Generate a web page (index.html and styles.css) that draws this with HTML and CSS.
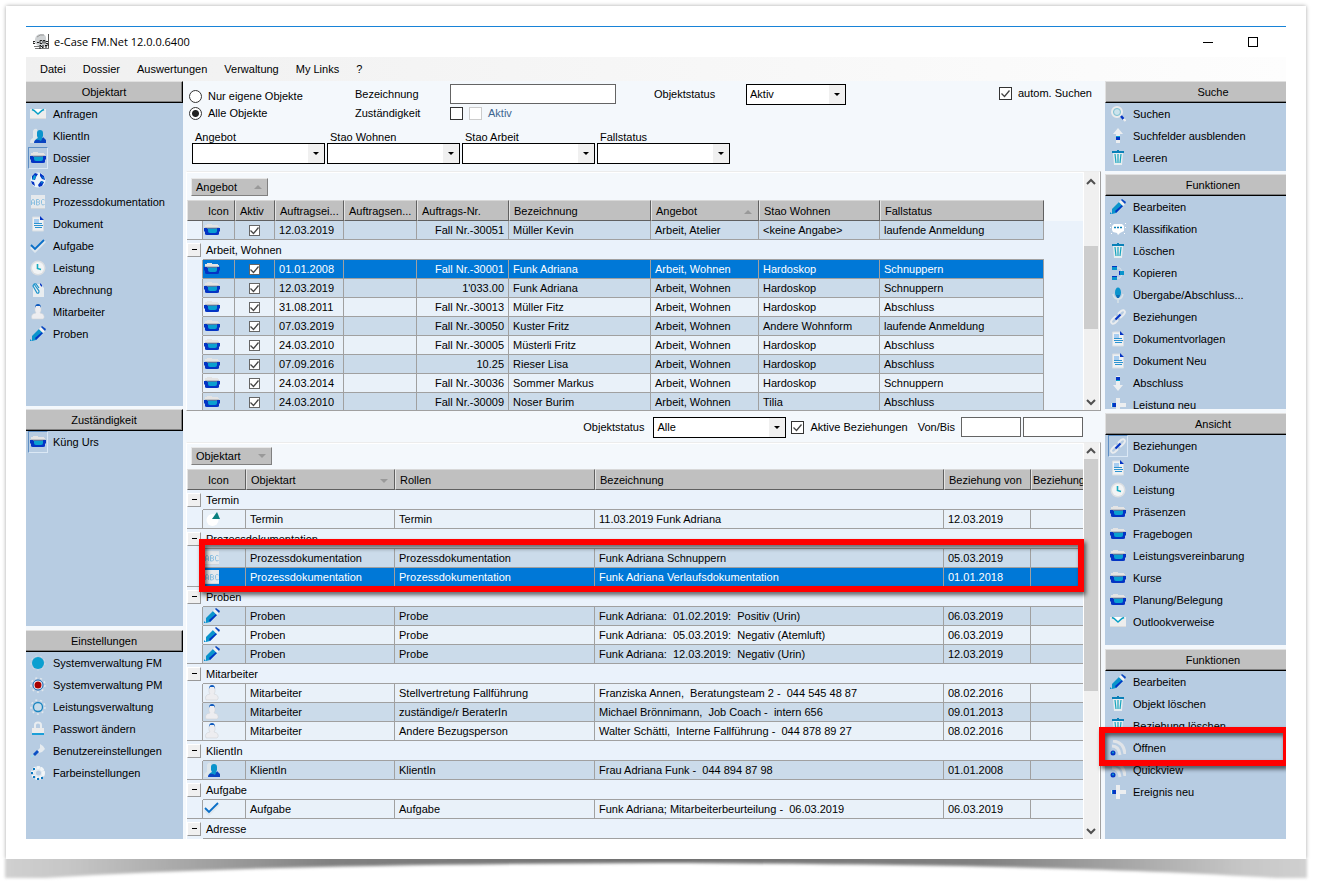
FILE: index.html
```html
<!DOCTYPE html>
<html lang="de">
<head>
<meta charset="utf-8">
<title>e-Case FM.Net 12.0.0.6400</title>
<link rel="stylesheet" href="styles.css">
</head>
<body>
<svg class="sprite" aria-hidden="true">
  <symbol id="mail" viewBox="0 0 16 16"><path d="M0 3h16v10H0z" fill="#ededed"/><path d="M2 3h12v1L8 9 2 4z" fill="#fff"/><path d="M2 3.500l2 1 4 3.500 4-3.500 2-1" fill="none" stroke="#0a9fc4" stroke-width="1.500"/><path d="M0 12.500h16" stroke="#dcdcdc"/></symbol>
  <symbol id="client" viewBox="0 0 16 16"><path d="M3 3q1-3 4-2l1 5-2 9H0q0-4 3-5z" fill="#dfe6ea"/><path d="M7 5q0-3 3-3t3 3v3l-1 2q3 0 3 3H5q0-2 3-3L7 8z" fill="#0a94cc"/><path d="M4 15q0-4 5-3l2 1 2-4 3 3v3z" fill="#0a44c0"/></symbol>
  <symbol id="dossier" viewBox="0 0 16 16"><path d="M1 5V3h2V2h5v1h6v1h1v2H1z" fill="#e4e4e4"/><path d="M1 5h14v1H1z" fill="#bfc2c6"/><path d="M0 6h16v3l-1 1v2q0 1-2 1H3q-2 0-2-1v-2L0 9z" fill="#0434c4"/><path d="M4 6h9v3q0 2-2 2H6q-2 0-2-2z" fill="#0a9fd0"/><path d="M3 6h10v1H3z" fill="#4a78a8"/></symbol>
  <symbol id="globe" viewBox="0 0 16 16"><circle cx="8" cy="8" r="7.500" fill="#ebf4fa"/><path d="M2 4l3-3 3 1-2 3-1 3-3-1zM10 1l4 3 1 4-3-1-2-3zM1 9l3 1 1 4-3-2zM11 9l3 1-2 4-3 1-1-2z" fill="#0434c4"/><path d="M4 3l2 1-1 3-3 1zM11 10l2-1-1 3zM12 4l2 2-1 1z" fill="#0a9fd0"/></symbol>
  <symbol id="abc" viewBox="0 0 16 16"><path d="M1 1h14v13H1z" fill="#e6e9ec"/><path d="M1 14.500h14" stroke="#cfd5da"/><path d="M1.500 11V7l1-1.500h1l1 1.500v4M1.500 9h3M6.500 11V5.500h2l1 1v1l-1 .5 1 1v1l-1 1zM6.500 8h2M14.500 6l-1-.5h-1l-1 1v3l1 1.500h1l1-1" fill="none" stroke="#8bbfe0"/></symbol>
  <symbol id="doc" viewBox="0 0 16 16"><path d="M2.500 1h8l3 3v11h-11z" fill="#eef1f4" stroke="#d8dde2"/><path d="M10 0l4 4h-4z" fill="#0434c4"/><path d="M4 3h5v4H4z" fill="#a8cdf0"/><path d="M4 7.500h8M4 9.500h9M5 11.500h7" stroke="#2c93d0"/></symbol>
  <symbol id="check" viewBox="0 0 16 16"><path d="M1 9l4 4L15 3" fill="none" stroke="#dfe7ee" stroke-width="3"/><path d="M1 7l4 4L14 2" fill="none" stroke="#0a6fc8" stroke-width="1.800"/></symbol>
  <symbol id="clock" viewBox="0 0 16 16"><circle cx="8" cy="8" r="7.500" fill="#dcdfe2"/><circle cx="8" cy="8" r="6" fill="#f2f4f5"/><path d="M7.500 4v4.500L11 9.500" fill="none" stroke="#16abc0" stroke-width="1.600"/></symbol>
  <symbol id="clip" viewBox="0 0 16 16"><path d="M3 2h7l4 4v9H3z" fill="#e9edf0"/><path d="M10 1l2 2v2l-2-2z" fill="#0434c4"/><path d="M4 2l5 7q0 3-2 2L3 4q1-3 3-2l3 4" fill="none" stroke="#1992cc" stroke-width="1.200"/></symbol>
  <symbol id="person" viewBox="0 0 16 16"><path d="M5 3q3-4 6 0v4l-1 2q5 1 4 5l-1 1H2q-2-5 4-6L5 7z" fill="#ededf0" stroke="#d0d4d8" stroke-width=".6"/><path d="M5 4q0-4 3-4t3 4l-1-2H6z" fill="#0b58bd"/></symbol>
  <symbol id="pencil" viewBox="0 0 16 16"><path d="M2 10l7-7 4 4-7 7-4 1z" fill="#0a94cc"/><path d="M5 12l7-6 1 1-7 7z" fill="#0434c4"/><path d="M9 3l2-2 4 4-2 2z" fill="#f1f1f1"/><path d="M11 1l1-1 4 3-1 2z" fill="#0b48c0"/><path d="M0 15v-2l2 2z" fill="#0a8fd0"/></symbol>
  <symbol id="sysfm" viewBox="0 0 16 16"><circle cx="8" cy="8" r="7" fill="none" stroke="#d3dde6" stroke-dasharray="2 3"/><circle cx="8" cy="8" r="6" fill="#0a9fd0"/></symbol>
  <symbol id="syspm" viewBox="0 0 16 16"><circle cx="8" cy="8" r="7" fill="none" stroke="#e3e8ec" stroke-width="1.500" stroke-dasharray="2 3"/><circle cx="8" cy="8" r="5" fill="#fff" stroke="#1262b0"/><circle cx="8" cy="8" r="3.500" fill="#a80000"/></symbol>
  <symbol id="ring" viewBox="0 0 16 16"><circle cx="8" cy="8" r="7" fill="none" stroke="#e3e8ec" stroke-width="1.500" stroke-dasharray="2 3"/><circle cx="8" cy="8" r="4.500" fill="#c8dcea" stroke="#1b86c0" stroke-width="1.300"/></symbol>
  <symbol id="lock" viewBox="0 0 16 16"><path d="M5 8V4q0-2.500 3-2.500T11 4v4" fill="none" stroke="#e9edf0" stroke-width="2"/><path d="M2 7h12v6H2z" fill="#ececec"/><path d="M2 12h12v2H2z" fill="#1c9fd8"/></symbol>
  <symbol id="wrench" viewBox="0 0 16 16"><path d="M7 8l3-3V1l3 2 2 3-3 3-3 1z" fill="#e6ebef"/><path d="M3 11l4-4 2 2-4 4z" fill="#0b50c4"/><path d="M1 14l2-2" stroke="#a3ddf0" stroke-width="2"/></symbol>
  <symbol id="dots" viewBox="0 0 16 16"><circle cx="9" cy="7" r="5.500" fill="#e2eaf0"/><circle cx="8" cy="8" r="5.500" fill="none" stroke="#f3f6f8" stroke-width="3" stroke-dasharray="3 1"/><circle cx="8.500" cy="8" r="2.500" fill="#b7cce2"/><path d="M3 3h2v2H3zM1 7h2v2H1zM3 11h2v2H3zM7 13h2v2H7zM11 12h2v2h-2z" fill="#0a78c0"/></symbol>
  <symbol id="search" viewBox="0 0 16 16"><circle cx="7" cy="6" r="5" fill="#cbe3ec" stroke="#ececec" stroke-width="2"/><circle cx="7" cy="6" r="3.500" fill="none" stroke="#7dbfd0"/><path d="M11 10l2.500 3" stroke="#0434c4" stroke-width="2.500"/><path d="M13.500 13l2 2" stroke="#eee" stroke-width="2"/></symbol>
  <symbol id="up" viewBox="0 0 16 16"><path d="M8 0l5 6h-3v9H6V6H3z" fill="#eceef0"/><path d="M6 8h4v4H6z" fill="#0434c4"/><path d="M6 8h4v1H6z" fill="#0a9fd0"/></symbol>
  <symbol id="down" viewBox="0 0 16 16"><path d="M8 16l5-6h-3V1H6v9H3z" fill="#eceef0"/><path d="M6 2h4v4H6z" fill="#0434c4"/><path d="M6 5h4v1H6z" fill="#0a9fd0"/></symbol>
  <symbol id="trash" viewBox="0 0 16 16"><path d="M3 3h10l-1 12H4z" fill="#e6edf0"/><path d="M2 1h5V0h2v1h5v2H2z" fill="#0a80b8"/><path d="M5 4l1 9M8 4v9M11 4l-1 9" stroke="#17a5bf" stroke-width="1.200"/></symbol>
  <symbol id="bubble" viewBox="0 0 16 16"><path d="M4 3h8l2 2v5l-4 2-2 2-1-2-4-1-1-2V5z" fill="#fff"/><path d="M4 6.500h2M7 6.500h2M10 6.500h2" stroke="#0a80b8" stroke-width="1.500"/><path d="M0 2.500h1M15 2.500h1M0 6.500h1M15 6.500h1M1 12.500h1M14 12.500h1" stroke="#fff"/></symbol>
  <symbol id="copy" viewBox="0 0 16 16"><path d="M7 3h3l3 5-3 5H7" fill="none" stroke="#d7e2ea"/><path d="M2 1h5v4H2zM9 6h5v4H9zM2 11h5v4H2z" fill="#0a94cc"/><path d="M2 1h5v1H2zM9 6h1v4H9zM2 11h5v1H2z" fill="#0434c4"/></symbol>
  <symbol id="mic" viewBox="0 0 16 16"><path d="M3 7q1 5 5 5t5-5M8 12v4" fill="none" stroke="#d9e2e8" stroke-width="1.500"/><ellipse cx="8" cy="5.500" rx="3" ry="5" fill="#0a94cc"/><path d="M6 8h4l-1 3H7z" fill="#0a6cb8"/></symbol>
  <symbol id="link" viewBox="0 0 16 16"><path d="M8 5l3-3q3-2 4 1 0 2-5 6M8 11l-3 3q-3 2-4-1 0-2 5-6" fill="none" stroke="#e9ecef" stroke-width="2"/><path d="M5.500 10.500l5-5" stroke="#0434c4" stroke-width="2"/></symbol>
  <symbol id="plus" viewBox="0 0 16 16"><path d="M6 1h4v5h6v4h-6v5H6v-5H1V6h5z" fill="#eceef0"/><path d="M2 6h4v4H2z" fill="#0a70d0"/><path d="M3 6h3v4H3z" fill="#0434c4"/></symbol>
  <symbol id="rss" viewBox="0 0 16 16"><path d="M2 6q7 0 8 9M3 1q11 1 12 13" fill="none" stroke="#e0e4e8" stroke-width="3"/><circle cx="3" cy="13" r="2.500" fill="#0434c4"/><circle cx="3" cy="12.500" r="1" fill="#0a9fd0"/></symbol>
  <symbol id="termin" viewBox="0 0 16 16"><circle cx="8.500" cy="9" r="6" fill="#fff"/><path d="M8 8l5-7 3 7z" fill="#0b8080"/></symbol>
  <symbol id="app" viewBox="0 0 16 16"><path d="M2 5q1-5 6-5t5 4l1 9H6L2 9z" fill="#cfd2d4"/><path d="M4 3q3-3 7-2" fill="none" stroke="#999"/><path d="M15.500 0v15" stroke="#555"/><path d="M2 7.500H0v2h2M4 8.500h2M9 6.500H7v3h2M10 9.500v-3h2v3M13 7.500h2M13 9.500h2" fill="none" stroke="#222"/><path d="M1 12.500h5M2 14.500h14" stroke="#777"/><path d="M7 15v-4l3 3v-3M12 11.500h2M12 13h2M14 11h2" fill="none" stroke="#111"/></symbol>
</svg>

<div class="sheet">
<div class="app">
  <header class="titlebar">
    <svg class="ic"><use href="#app"/></svg>
    <h1>e-Case FM.Net 12.0.0.6400</h1>
    <button class="win min" aria-label="Minimieren"></button>
    <button class="win max" aria-label="Maximieren"></button>
  </header>
  <nav class="menubar">
    <button>Datei</button><button>Dossier</button><button>Auswertungen</button><button>Verwaltung</button><button>My Links</button><button>?</button>
  </nav>

  <div class="main">
    <aside class="side left">
      <section class="panel p-a"><h2>Objektart</h2>
        <ul>
          <li><button><svg class="ic"><use href="#mail"/></svg>Anfragen</button></li>
          <li><button><svg class="ic"><use href="#client"/></svg>KlientIn</button></li>
          <li><button class="on"><svg class="ic"><use href="#dossier"/></svg>Dossier</button></li>
          <li><button><svg class="ic"><use href="#globe"/></svg>Adresse</button></li>
          <li><button><svg class="ic"><use href="#abc"/></svg>Prozessdokumentation</button></li>
          <li><button><svg class="ic"><use href="#doc"/></svg>Dokument</button></li>
          <li><button><svg class="ic"><use href="#check"/></svg>Aufgabe</button></li>
          <li><button><svg class="ic"><use href="#clock"/></svg>Leistung</button></li>
          <li><button><svg class="ic"><use href="#clip"/></svg>Abrechnung</button></li>
          <li><button><svg class="ic"><use href="#person"/></svg>Mitarbeiter</button></li>
          <li><button><svg class="ic"><use href="#pencil"/></svg>Proben</button></li>
        </ul>
      </section>
      <section class="panel p-b"><h2>Zuständigkeit</h2>
        <ul><li><button class="on"><svg class="ic"><use href="#dossier"/></svg>Küng Urs</button></li></ul>
      </section>
      <section class="panel p-c"><h2>Einstellungen</h2>
        <ul>
          <li><button><svg class="ic"><use href="#sysfm"/></svg>Systemverwaltung FM</button></li>
          <li><button><svg class="ic"><use href="#syspm"/></svg>Systemverwaltung PM</button></li>
          <li><button><svg class="ic"><use href="#ring"/></svg>Leistungsverwaltung</button></li>
          <li><button><svg class="ic"><use href="#lock"/></svg>Passwort ändern</button></li>
          <li><button><svg class="ic"><use href="#wrench"/></svg>Benutzereinstellungen</button></li>
          <li><button><svg class="ic"><use href="#dots"/></svg>Farbeinstellungen</button></li>
        </ul>
      </section>
    </aside>

    <main class="center">
      <form class="search">
        <div class="criteria">
          <div class="radios">
            <label><input type="radio" name="scope">Nur eigene Objekte</label>
            <label><input type="radio" name="scope" checked>Alle Objekte</label>
          </div>
          <div class="fields">
            <label for="bez">Bezeichnung</label><input class="text" id="bez" type="text">
            <label for="zus">Zuständigkeit</label>
            <div class="checks"><input type="checkbox" id="zus"><label class="off"><input type="checkbox" disabled>Aktiv</label></div>
          </div>
          <label class="status-label" for="status">Objektstatus</label>
          <span class="combo status"><select id="status"><option>Aktiv</option></select></span>
          <label class="auto"><input type="checkbox" checked>autom. Suchen</label>
        </div>
        <div class="filters">
          <div><label for="f1">Angebot</label><span class="combo"><select id="f1"><option></option></select></span></div>
          <div><label for="f2">Stao Wohnen</label><span class="combo"><select id="f2"><option></option></select></span></div>
          <div><label for="f3">Stao Arbeit</label><span class="combo"><select id="f3"><option></option></select></span></div>
          <div><label for="f4">Fallstatus</label><span class="combo"><select id="f4"><option></option></select></span></div>
        </div>
      </form>

      <section class="grid g1">
        <div class="view">
          <div class="groupbar"><button class="chip">Angebot<i class="asc"></i></button></div>
          <table>
            <colgroup><col class="w15"><col class="w33"><col class="w40"><col class="w69"><col class="w73"><col class="w92"><col class="w142"><col class="w108"><col class="w121"><col class="w164"><col></colgroup>
            <thead><tr><th colspan="2" class="first">Icon</th><th>Aktiv</th><th>Auftragsei...</th><th>Auftragsen...</th><th>Auftrags-Nr.</th><th>Bezeichnung</th><th>Angebot<i class="asc"></i></th><th>Stao Wohnen</th><th>Fallstatus</th><td class="rest"></td></tr></thead>
            <tbody>
              <tr class="dark last"><td class="gut"></td><td class="i"><svg class="ic"><use href="#dossier"/></svg></td><td class="c"><input type="checkbox" aria-label="Aktiv" checked></td><td>12.03.2019</td><td></td><td class="n">Fall Nr.-30051</td><td>Müller Kevin</td><td>Arbeit, Atelier</td><td>&lt;keine Angabe&gt;</td><td>laufende Anmeldung</td><td class="rest"></td></tr>
              <tr class="group"><td class="gut"><button class="ex" aria-label="Gruppe schliessen"></button></td><td colspan="9">Arbeit, Wohnen</td><td class="rest"></td></tr>
              <tr class="sel"><td class="gut"></td><td class="i"><svg class="ic"><use href="#dossier"/></svg></td><td class="c"><input type="checkbox" aria-label="Aktiv" checked></td><td>01.01.2008</td><td></td><td class="n">Fall Nr.-30001</td><td>Funk Adriana</td><td>Arbeit, Wohnen</td><td>Hardoskop</td><td>Schnuppern</td><td class="rest"></td></tr>
              <tr class="dark"><td class="gut"></td><td class="i"><svg class="ic"><use href="#dossier"/></svg></td><td class="c"><input type="checkbox" aria-label="Aktiv" checked></td><td>12.03.2019</td><td></td><td class="n">1'033.00</td><td>Funk Adriana</td><td>Arbeit, Wohnen</td><td>Hardoskop</td><td>Schnuppern</td><td class="rest"></td></tr>
              <tr><td class="gut"></td><td class="i"><svg class="ic"><use href="#dossier"/></svg></td><td class="c"><input type="checkbox" aria-label="Aktiv" checked></td><td>31.08.2011</td><td></td><td class="n">Fall Nr.-30013</td><td>Müller Fitz</td><td>Arbeit, Wohnen</td><td>Hardoskop</td><td>Abschluss</td><td class="rest"></td></tr>
              <tr class="dark"><td class="gut"></td><td class="i"><svg class="ic"><use href="#dossier"/></svg></td><td class="c"><input type="checkbox" aria-label="Aktiv" checked></td><td>07.03.2019</td><td></td><td class="n">Fall Nr.-30050</td><td>Kuster Fritz</td><td>Arbeit, Wohnen</td><td>Andere Wohnform</td><td>laufende Anmeldung</td><td class="rest"></td></tr>
              <tr><td class="gut"></td><td class="i"><svg class="ic"><use href="#dossier"/></svg></td><td class="c"><input type="checkbox" aria-label="Aktiv" checked></td><td>24.03.2010</td><td></td><td class="n">Fall Nr.-30005</td><td>Müsterli Fritz</td><td>Arbeit, Wohnen</td><td>Hardoskop</td><td>Abschluss</td><td class="rest"></td></tr>
              <tr class="dark"><td class="gut"></td><td class="i"><svg class="ic"><use href="#dossier"/></svg></td><td class="c"><input type="checkbox" aria-label="Aktiv" checked></td><td>07.09.2016</td><td></td><td class="n">10.25</td><td>Rieser Lisa</td><td>Arbeit, Wohnen</td><td>Hardoskop</td><td>Abschluss</td><td class="rest"></td></tr>
              <tr><td class="gut"></td><td class="i"><svg class="ic"><use href="#dossier"/></svg></td><td class="c"><input type="checkbox" aria-label="Aktiv" checked></td><td>24.03.2014</td><td></td><td class="n">Fall Nr.-30036</td><td>Sommer Markus</td><td>Arbeit, Wohnen</td><td>Hardoskop</td><td>Schnuppern</td><td class="rest"></td></tr>
              <tr class="dark"><td class="gut"></td><td class="i"><svg class="ic"><use href="#dossier"/></svg></td><td class="c"><input type="checkbox" aria-label="Aktiv" checked></td><td>24.03.2010</td><td></td><td class="n">Fall Nr.-30009</td><td>Noser Burim</td><td>Arbeit, Wohnen</td><td>Tilia</td><td>Abschluss</td><td class="rest"></td></tr>
            </tbody>
          </table>
        </div>
        <div class="scroll"><svg class="arr"><path d="M1 6l4-4 4 4"/></svg><div class="track"><b class="gap"></b><b class="thumb"></b></div><svg class="arr"><path d="M1 2l4 4 4-4"/></svg></div>
      </section>

      <form class="midbar">
        <label for="rel">Objektstatus</label>
        <span class="combo"><select id="rel"><option>Alle</option></select></span>
        <label class="act"><input type="checkbox" checked>Aktive Beziehungen</label>
        <label class="range" for="von">Von/Bis</label>
        <input class="text date" id="von" type="text"><input class="text date" aria-label="Bis" type="text">
      </form>

      <section class="grid g2">
        <div class="view">
          <div class="groupbar"><button class="chip">Objektart<i class="desc"></i></button></div>
          <table>
            <colgroup><col class="w15"><col class="w44"><col class="w149"><col class="w200"><col class="flex"><col class="w87"><col class="w52"></colgroup>
            <thead><tr><th colspan="2" class="first">Icon</th><th>Objektart<i class="desc"></i></th><th>Rollen</th><th>Bezeichnung</th><th>Beziehung von</th><th class="end">Beziehung</th></tr></thead>
            <tbody>
              <tr class="group"><td class="gut"><button class="ex" aria-label="Gruppe schliessen"></button></td><td colspan="6">Termin</td></tr>
              <tr class="last"><td class="gut"></td><td class="i"><svg class="ic"><use href="#termin"/></svg></td><td>Termin</td><td>Termin</td><td>11.03.2019 Funk Adriana</td><td>12.03.2019</td><td></td></tr>
              <tr class="group"><td class="gut"><button class="ex" aria-label="Gruppe schliessen"></button></td><td colspan="6">Prozessdokumentation</td></tr>
              <tr class="dark"><td class="gut"></td><td class="i"><svg class="ic"><use href="#abc"/></svg></td><td>Prozessdokumentation</td><td>Prozessdokumentation</td><td>Funk Adriana Schnuppern</td><td>05.03.2019</td><td></td></tr>
              <tr class="sel last"><td class="gut"></td><td class="i"><svg class="ic"><use href="#abc"/></svg></td><td>Prozessdokumentation</td><td>Prozessdokumentation</td><td>Funk Adriana Verlaufsdokumentation</td><td>01.01.2018</td><td></td></tr>
              <tr class="group"><td class="gut"><button class="ex" aria-label="Gruppe schliessen"></button></td><td colspan="6">Proben</td></tr>
              <tr class="dark"><td class="gut"></td><td class="i"><svg class="ic"><use href="#pencil"/></svg></td><td>Proben</td><td>Probe</td><td>Funk Adriana:&nbsp; 01.02.2019:&nbsp; Positiv (Urin)</td><td>06.03.2019</td><td></td></tr>
              <tr><td class="gut"></td><td class="i"><svg class="ic"><use href="#pencil"/></svg></td><td>Proben</td><td>Probe</td><td>Funk Adriana:&nbsp; 05.03.2019:&nbsp; Negativ (Atemluft)</td><td>06.03.2019</td><td></td></tr>
              <tr class="dark last"><td class="gut"></td><td class="i"><svg class="ic"><use href="#pencil"/></svg></td><td>Proben</td><td>Probe</td><td>Funk Adriana:&nbsp; 12.03.2019:&nbsp; Negativ (Urin)</td><td>12.03.2019</td><td></td></tr>
              <tr class="group"><td class="gut"><button class="ex" aria-label="Gruppe schliessen"></button></td><td colspan="6">Mitarbeiter</td></tr>
              <tr><td class="gut"></td><td class="i"><svg class="ic"><use href="#person"/></svg></td><td>Mitarbeiter</td><td>Stellvertretung Fallführung</td><td>Franziska Annen,&nbsp; Beratungsteam 2 -&nbsp; 044 545 48 87</td><td>08.02.2016</td><td></td></tr>
              <tr class="dark"><td class="gut"></td><td class="i"><svg class="ic"><use href="#person"/></svg></td><td>Mitarbeiter</td><td>zuständige/r BeraterIn</td><td>Michael Brönnimann,&nbsp; Job Coach -&nbsp; intern 656</td><td>09.01.2013</td><td></td></tr>
              <tr class="last"><td class="gut"></td><td class="i"><svg class="ic"><use href="#person"/></svg></td><td>Mitarbeiter</td><td>Andere Bezugsperson</td><td>Walter Schätti,&nbsp; Interne Fallführung -&nbsp; 044 878 89 27</td><td>08.02.2016</td><td></td></tr>
              <tr class="group"><td class="gut"><button class="ex" aria-label="Gruppe schliessen"></button></td><td colspan="6">KlientIn</td></tr>
              <tr class="dark last"><td class="gut"></td><td class="i"><svg class="ic"><use href="#client"/></svg></td><td>KlientIn</td><td>KlientIn</td><td>Frau Adriana Funk -&nbsp; 044 894 87 98</td><td>01.01.2008</td><td></td></tr>
              <tr class="group"><td class="gut"><button class="ex" aria-label="Gruppe schliessen"></button></td><td colspan="6">Aufgabe</td></tr>
              <tr class="last"><td class="gut"></td><td class="i"><svg class="ic"><use href="#check"/></svg></td><td>Aufgabe</td><td>Aufgabe</td><td>Funk Adriana; Mitarbeiterbeurteilung -&nbsp; 06.03.2019</td><td>06.03.2019</td><td></td></tr>
              <tr class="group"><td class="gut"><button class="ex" aria-label="Gruppe schliessen"></button></td><td colspan="6">Adresse</td></tr>
            </tbody>
          </table>
        </div>
        <div class="scroll"><svg class="arr"><path d="M1 6l4-4 4 4"/></svg><div class="track"><b class="thumb"></b></div><svg class="arr"><path d="M1 2l4 4 4-4"/></svg></div>
        <div class="mark rows"></div>
      </section>
    </main>

    <aside class="side right">
      <section class="panel p-d"><h2>Suche</h2>
        <ul>
          <li><button><svg class="ic"><use href="#search"/></svg>Suchen</button></li>
          <li><button><svg class="ic"><use href="#up"/></svg>Suchfelder ausblenden</button></li>
          <li><button><svg class="ic"><use href="#trash"/></svg>Leeren</button></li>
        </ul>
      </section>
      <section class="panel p-e"><h2>Funktionen</h2>
        <ul>
          <li><button><svg class="ic"><use href="#pencil"/></svg>Bearbeiten</button></li>
          <li><button><svg class="ic"><use href="#bubble"/></svg>Klassifikation</button></li>
          <li><button><svg class="ic"><use href="#trash"/></svg>Löschen</button></li>
          <li><button><svg class="ic"><use href="#copy"/></svg>Kopieren</button></li>
          <li><button><svg class="ic"><use href="#mic"/></svg>Übergabe/Abschluss...</button></li>
          <li><button><svg class="ic"><use href="#link"/></svg>Beziehungen</button></li>
          <li><button><svg class="ic"><use href="#doc"/></svg>Dokumentvorlagen</button></li>
          <li><button><svg class="ic"><use href="#doc"/></svg>Dokument Neu</button></li>
          <li><button><svg class="ic"><use href="#down"/></svg>Abschluss</button></li>
          <li><button><svg class="ic"><use href="#plus"/></svg>Leistung neu</button></li>
        </ul>
      </section>
      <section class="panel p-f"><h2>Ansicht</h2>
        <ul>
          <li><button class="on"><svg class="ic"><use href="#link"/></svg>Beziehungen</button></li>
          <li><button><svg class="ic"><use href="#doc"/></svg>Dokumente</button></li>
          <li><button><svg class="ic"><use href="#clock"/></svg>Leistung</button></li>
          <li><button><svg class="ic"><use href="#dossier"/></svg>Präsenzen</button></li>
          <li><button><svg class="ic"><use href="#dossier"/></svg>Fragebogen</button></li>
          <li><button><svg class="ic"><use href="#dossier"/></svg>Leistungsvereinbarung</button></li>
          <li><button><svg class="ic"><use href="#dossier"/></svg>Kurse</button></li>
          <li><button><svg class="ic"><use href="#dossier"/></svg>Planung/Belegung</button></li>
          <li><button><svg class="ic"><use href="#mail"/></svg>Outlookverweise</button></li>
        </ul>
      </section>
      <section class="panel p-g"><h2>Funktionen</h2>
        <ul>
          <li><button><svg class="ic"><use href="#pencil"/></svg>Bearbeiten</button></li>
          <li><button><svg class="ic"><use href="#trash"/></svg>Objekt löschen</button></li>
          <li><button><svg class="ic"><use href="#trash"/></svg>Beziehung löschen</button></li>
          <li class="marked"><button><svg class="ic"><use href="#rss"/></svg>Öffnen</button><div class="mark open"></div></li>
          <li><button><svg class="ic"><use href="#rss"/></svg>Quickview</button></li>
          <li><button><svg class="ic"><use href="#plus"/></svg>Ereignis neu</button></li>
        </ul>
      </section>
    </aside>
  </div>
</div>
</div>
<svg class="curl" viewBox="0 0 1320 29" preserveAspectRatio="none" aria-hidden="true">
  <defs>
    <linearGradient id="cg"><stop offset="0" stop-color="#d0d0d0"/><stop offset=".05" stop-color="#c6c6c6"/><stop offset=".25" stop-color="#808080"/><stop offset=".5" stop-color="#707070"/><stop offset=".75" stop-color="#808080"/><stop offset=".95" stop-color="#c6c6c6"/><stop offset="1" stop-color="#d0d0d0"/></linearGradient>
    <filter id="soft" x="-2%" y="-50%" width="104%" height="200%"><feGaussianBlur stdDeviation="1.400"/></filter>
  </defs>
  <path d="M5-6H1307V19H1275C1120 9 920 5 660 4C400 5 200 9 45 19H5z" fill="url(#cg)" filter="url(#soft)"/>
</svg>
</body>
</html>
```
FILE: styles.css
```css
* { box-sizing: border-box; }
body {
  margin: 0;
  min-height: 100vh;
  display: flex;
  flex-direction: column;
  background: #fff;
  color: #000;
  font: 11px/13px "Liberation Sans", Arial, sans-serif;
}
button, input, select { font: inherit; color: inherit; margin: 0; }
button { border: 0; padding: 0; background: none; text-align: left; }
h1, h2 { margin: 0; font-weight: normal; font-size: 11px; }
ul { list-style: none; margin: 0; padding: 0; }
.sprite { display: none; }
.ic { width: 16px; height: 16px; flex: none; display: block; }

.sheet {
  flex: 1;
  display: flex;
  position: relative;
  z-index: 1;
  margin: 6px 14px 0 6px;
  padding: 20px;
  background: #fff;
  box-shadow: 0 0 4px rgba(0, 0, 0, .35);
  clip-path: inset(-6px -8px 0 -6px);
}
.curl { display: block; width: 100%; height: 29px; }
.app { flex: 1; min-width: 0; display: flex; flex-direction: column; border-top: 1px solid #1883d7; }

.titlebar { height: 30px; display: flex; align-items: center; padding: 0 28px 0 7px; }
.titlebar h1 { flex: 1; margin-left: 5px; font: 11px/16px "Open Sans", "Segoe UI", sans-serif; }
.win { width: 10px; height: 10px; margin-left: 35px; }
.win.min { background: linear-gradient(#000, #000) 0 5px / 10px 1px no-repeat; }
.win.max { border: 1px solid #000; }
.menubar { height: 24px; display: flex; align-items: center; gap: 17px; padding-left: 14px; background: linear-gradient(90deg, #f0f0f0, #fdfdfd); }

.main { flex: 1; display: grid; grid-template-columns: 157px minmax(0, 1fr) 181px; background: #f4f8fc; }
.side { display: flex; flex-direction: column; }
.panel { display: flex; flex-direction: column; background: #b7cce2; }
.panel h2 {
  flex: none;
  height: 22px;
  padding-top: 4px;
  text-align: center;
  background: #c0c0c0;
  border-top: 1px solid #e0e0e0;
  border-bottom: 1px solid #000;
  box-shadow: inset 0 -1px #808080;
}
.left h2 { border-right: 1px solid #000; box-shadow: inset -1px -1px #808080; }
.right h2 { border-left: 1px solid #e0e0e0; padding-left: 34px; }
.panel ul { overflow: hidden; }
.p-a { height: 325px; margin-bottom: 3px; }
.p-b { height: 217px; margin-bottom: 4px; }
.p-c, .p-g { flex: 1; }
.p-d { height: 90px; margin-bottom: 3px; }
.p-e { height: 235px; margin-bottom: 4px; }
.p-f { height: 232px; margin-bottom: 4px; }
.p-g ul { overflow: visible; }
.panel li button { display: flex; align-items: center; width: 100%; height: 22px; padding-left: 2px; gap: 5px; }
.right li button { padding-left: 3px; }
.panel li .ic { width: 20px; height: 22px; padding: 2px 1px; border: 1px solid transparent; }
.panel li .on .ic { border-color: #5f8fc4 #dbe8f5 #dbe8f5 #5f8fc4; }

.center { display: flex; flex-direction: column; min-width: 0; }
.search { height: 90px; padding: 3px 13px 0 6px; }
.criteria { display: flex; height: 48px; }
.radios { width: 166px; padding-top: 4px; }
.radios label { display: flex; align-items: center; gap: 6px; height: 17px; }
.fields { display: grid; grid-template-columns: 95px 166px; grid-template-rows: 20px 19px; align-items: center; align-content: start; }
.checks, .off, .auto, .act { display: flex; align-items: center; gap: 6px; }
.off { color: #3d6690; }
.status-label { margin: 4px 0 0 38px; width: 92px; }
.auto { margin-left: auto; height: 19px; }
input[type=radio], input[type=checkbox] { appearance: none; flex: none; width: 13px; height: 13px; border: 1px solid #333; background: #fff; }
input[type=radio] { border-radius: 50%; }
input[type=radio]:checked { background: radial-gradient(circle, #222 3px, #fff 4px); }
input[type=checkbox]:checked {
  background: #fff url("data:image/svg+xml,%3Csvg xmlns='http://www.w3.org/2000/svg' viewBox='0 0 11 11'%3E%3Cpath d='M1.500 5.500l3 3 5-6' fill='none' stroke='%23444' stroke-width='1.300'/%3E%3C/svg%3E") center / 11px 11px;
}
input[type=checkbox]:disabled { border-color: #ccc; }
.text { width: 100%; height: 20px; border: 1px solid #646464; border-radius: 0; background: #fff; padding: 0 3px; }
.combo { display: block; position: relative; width: 133px; height: 21px; }
.combo select { appearance: none; width: 100%; height: 100%; padding: 0 3px; border: 1px solid #000; border-radius: 0; background: linear-gradient(#f0f0f0, #f0f0f0) right / 16px 100% no-repeat #fff; }
.combo::after { content: ""; position: absolute; right: 6px; top: 9px; border: 3px solid transparent; border-top-color: #000; border-bottom: 0; pointer-events: none; }
.combo.status { width: 100px; }
.filters { display: flex; gap: 2px; padding-left: 3px; }
.filters label { display: block; height: 11px; line-height: 11px; padding-left: 3px; }

.grid { position: relative; display: flex; margin: 0 4px 0 3px; border-left: 1px solid #fff; border-right: 1px solid #a0a0a0; border-top: 1px solid #ececec; }
.g1 { height: 240px; border-bottom: 1px solid #a0a0a0; }
.g2 { flex: 1; margin-top: 1px; }
.view { flex: 1; min-width: 0; overflow: hidden; background: #eaf2fb; }
.groupbar { height: 28px; padding: 5px 0 0 4px; background: #f4f8fc; border-top: 1px solid #fff; }
.g2 .groupbar { height: 26px; padding-top: 3px; }
.chip { display: inline-flex; align-items: center; justify-content: space-between; width: 77px; height: 18px; padding: 0 5px 0 4px; background: #c0c0c0; border: 1px solid #e8e8e8; border-right-color: #808080; border-bottom-color: #808080; }
.g2 .chip { width: 81px; }
.asc, .desc { width: 0; height: 0; border: 4px solid transparent; }
.asc { border-bottom-color: #999; border-top: 0; }
.desc { border-top-color: #999; border-bottom: 0; }
table { width: 100%; table-layout: fixed; border-collapse: separate; border-spacing: 0; }
th { position: relative; height: 21px; padding: 1px 4px 0; font-weight: normal; text-align: left; white-space: nowrap; overflow: hidden; background: #c0c0c0; border: 1px solid; border-color: #d8d8d8 #606060 #606060 #e4e4e4; }
th i { position: absolute; right: 6px; top: 9px; }
th.first { padding-left: 20px; }
th.end { padding: 1px 0 0 1px; border-right: 0; }
td { height: 19px; padding: 0 4px; white-space: nowrap; overflow: hidden; background: #e9f1f9; border-right: 1px solid #a0a0a0; border-bottom: 1px solid #a0a0a0; }
.g2 td:last-child { border-right: 0; }
.dark td { background: #cbdbea; }
.sel td { background: #0078d7; color: #fff; }
tr td.gut { padding: 0; background: #eaf2fb; border-bottom-color: #eaf2fb; }
tr.last td.gut { border-bottom-color: #a0a0a0; }
tr td.rest { background: #eaf2fb; border: 0; }
thead td.rest { background: #f4f8fc; }
.group td { height: 20px; background: #eaf2fb; border-right: 0; padding: 1px 3px 0; }
tr.group td.gut { padding: 0; }
tr td.i { padding: 0 1px; }
td.c { text-align: center; padding: 0; }
td.c input { display: block; width: 11px; height: 11px; margin: 0 auto; border-color: #666; }
td.n { text-align: right; }
.ex { display: block; width: 14px; height: 14px; background: linear-gradient(#000, #000) 4px 5px / 5px 1px no-repeat #f0f0f0; border: 1px solid #fff; border-right-color: #999; border-bottom-color: #999; }
.w15 { width: 16px; } .w33 { width: 32px; } .w40 { width: 40px; } .w44 { width: 43px; } .w52 { width: 52px; }
.w69 { width: 69px; } .w73 { width: 73px; } .w87 { width: 87px; } .w92 { width: 92px; } .w108 { width: 108px; }
.w121 { width: 121px; } .w142 { width: 142px; } .w149 { width: 149px; } .w164 { width: 164px; } .w200 { width: 200px; }

.scroll { flex: none; width: 17px; display: flex; flex-direction: column; align-items: center; padding: 6px 1px 4px 0; background: #f0f0f0; border-left: 1px solid #fff; border-right: 1px solid #fff; }
.g2 .scroll { padding-top: 4px; }
.arr { flex: none; width: 10px; height: 8px; fill: none; stroke: #505050; stroke-width: 2; }
.track { flex: 1; align-self: stretch; display: flex; flex-direction: column; padding-top: 4px; }
.gap { height: 27%; }
.thumb { display: block; height: 40%; background: #cdcdcd; }
.g2 .thumb { height: 63%; }

.midbar { height: 30px; display: flex; align-items: start; justify-content: flex-end; padding: 6px 22px 0 0; }
.midbar > label { line-height: 20px; }
.midbar .combo { margin: 0 5px 0 9px; }
.midbar .range { margin: 0 6px 0 10px; }
.date { width: 60px; }
.date + .date { margin-left: 2px; }

.mark { position: absolute; border: 6px solid #f00; filter: drop-shadow(2px 3px 2px rgba(0, 0, 0, .6)); pointer-events: none; }
.mark.rows { left: 12px; right: 16px; top: 96px; height: 53px; }
.marked { position: relative; }
.mark.open { left: -6px; right: 0; top: -10px; height: 39px; border-right-width: 3px; clip-path: inset(-10px 0 -10px -10px); }
```
